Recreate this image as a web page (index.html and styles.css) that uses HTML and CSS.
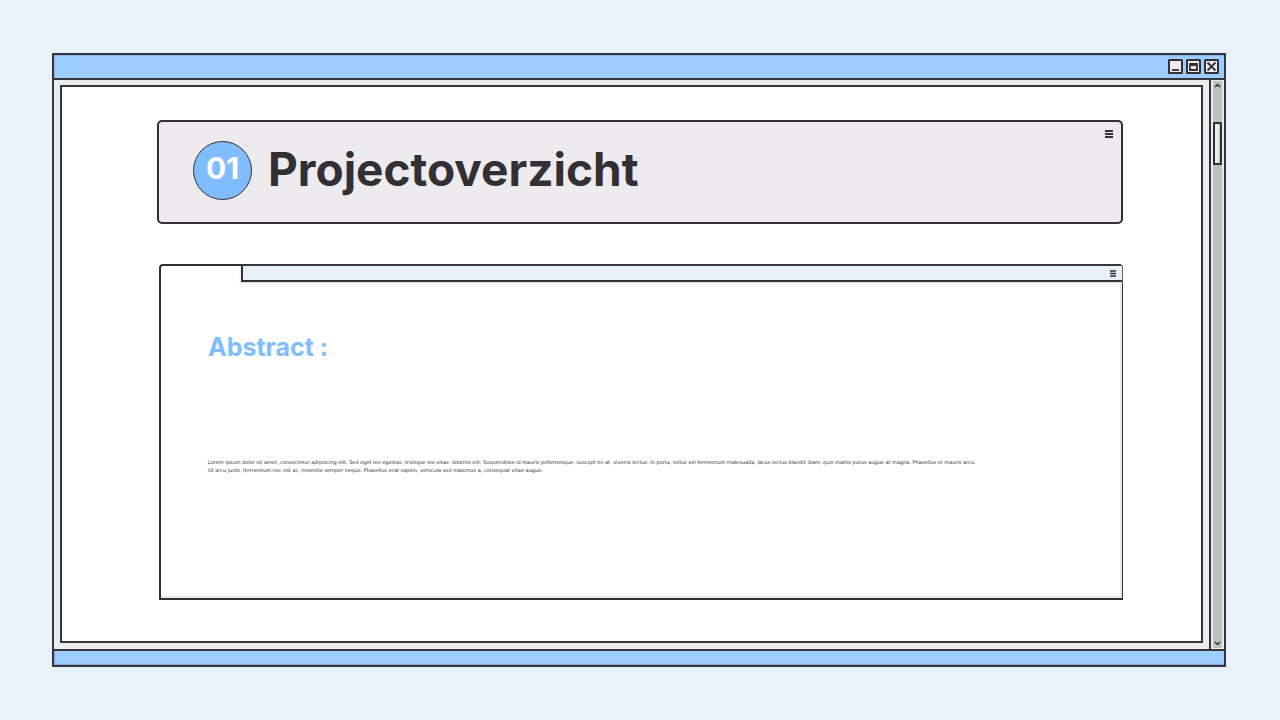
FILE: index.html
```html
<!DOCTYPE html>
<html lang="nl">
<head>
    <meta charset="UTF-8">
    <meta name="viewport" content="width=device-width, initial-scale=1.0">
    <title>Projectoverzicht</title>
    <link rel="stylesheet" href="styles.css">
</head>
<body>
    <div class="window">
        <div class="title-bar">
            <button class="window-button" aria-label="Minimaliseren">
                <svg viewBox="0 0 15 15"><rect x="1" y="1" width="13" height="13" rx="0.5"/><path d="M4 11h7"/></svg>
            </button>
            <button class="window-button" aria-label="Maximaliseren">
                <svg viewBox="0 0 15 15"><rect x="1" y="1" width="13" height="13" rx="0.5"/><path d="M4 5h7v6H4zM4 6h7"/></svg>
            </button>
            <button class="window-button" aria-label="Sluiten">
                <svg viewBox="0 0 15 15"><rect x="1" y="1" width="13" height="13" rx="0.5"/><path d="M3.5 3.5l8 8M11.5 3.5l-8 8"/></svg>
            </button>
        </div>
        <div class="window-body">
            <main class="page">
                <header class="header-box">
                    <span class="number">01</span>
                    <h1>Projectoverzicht</h1>
                    <button class="menu-button" aria-label="Menu">
                        <svg viewBox="0 0 8 8"><path d="M0 1h8M0 4h8M0 7h8"/></svg>
                    </button>
                </header>
                <section class="folder">
                    <div class="folder-top">
                        <div class="folder-tab"></div>
                        <div class="folder-strip">
                            <button class="menu-button small" aria-label="Menu">
                                <svg viewBox="0 0 6 7"><path d="M0 1h6M0 3.5h6M0 6h6"/></svg>
                            </button>
                        </div>
                    </div>
                    <div class="folder-content">
                        <h2>Abstract :</h2>
                        <p>Lorem ipsum dolor sit amet, consectetur adipiscing elit. Sed eget leo egestas, tristique leo vitae, lobortis elit. Suspendisse id mauris pellentesque, suscipit mi at, viverra lectus. In porta, tellus vel fermentum malesuada, lacus lectus blandit diam, quis mattis purus augue at magna. Phasellus et mauris arcu.<br>Ut arcu justo, fermentum nec est ac, molestie semper neque. Phasellus erat sapien, vehicula sed maximus a, consequat vitae augue.</p>
                    </div>
                </section>
            </main>
            <div class="scrollbar">
                <div class="track">
                    <button class="arrow" aria-label="Omhoog">
                        <svg viewBox="0 0 9 9"><path d="M2 6l2.5-2.5L7 6"/></svg>
                    </button>
                    <div class="thumb"></div>
                    <button class="arrow" aria-label="Omlaag">
                        <svg viewBox="0 0 9 9"><path d="M2 3l2.5 2.5L7 3"/></svg>
                    </button>
                </div>
            </div>
        </div>
        <div class="status-bar"></div>
    </div>
</body>
</html>
```
FILE: styles.css
```css
* {
    margin: 0;
    padding: 0;
    box-sizing: border-box;
}

body {
    font-family: Inter, sans-serif;
    color: #322f35;
    display: flex;
    min-height: 100vh;
    padding: 53px 54px 53px 52px;
    background-color: #e9f1f9;
}

button {
    border: none;
    background: none;
    cursor: pointer;
}

svg {
    display: block;
    width: 100%;
    height: 100%;
    fill: none;
    stroke: #322f35;
    stroke-width: 2;
}

.window {
    flex: 1;
    display: flex;
    flex-direction: column;
    border: 2px solid #36353c;
    background-color: #ebebeb;
}

/* Title bar */
.title-bar {
    display: flex;
    justify-content: flex-end;
    align-items: center;
    gap: 3px;
    height: 25px;
    padding-right: 5px;
    background-color: #9dccff;
    border-bottom: 2px solid #36353c;
    box-shadow: inset 1px 1px 1px #86b4e8;
}

.window-button {
    width: 15px;
    height: 15px;
}

.window-button rect {
    fill: #edebee;
}

.window-button path {
    stroke-width: 1.8;
}

.status-bar {
    height: 16px;
    background-color: #9dccff;
    border-top: 2px solid #36353c;
    box-shadow: inset 1px -1px 1px #7da9d6;
}

.window-body {
    flex: 1;
    display: flex;
}

.page {
    flex: 1;
    display: flex;
    flex-direction: column;
    gap: 40px;
    margin: 5px 6px 6px 6px;
    padding: 33px 78px 41px 95px;
    border: 2px solid #36353c;
    background-color: #fefefe;
}

/* Header */
.header-box {
    display: flex;
    align-items: center;
    height: 104px;
    padding: 0 8px 3px 34px;
    border: 2px solid #322f35;
    border-radius: 5px;
    background-color: #edebee;
}

.number {
    width: 59px;
    height: 59px;
    margin-right: 16px;
    padding-bottom: 5px;
    display: flex;
    justify-content: center;
    align-items: center;
    border: 1px solid #322f35;
    border-radius: 50%;
    background-color: #80bdff;
    color: #fff;
    font-size: 30px;
    font-weight: bold;
}

h1 {
    flex: 1;
    font-size: 46px;
    line-height: 56px;
    padding-bottom: 4px;
}

.menu-button {
    align-self: flex-start;
    width: 8px;
    height: 8px;
    margin-top: 8px;
}

.menu-button.small {
    width: 6px;
    height: 7px;
    margin-top: 4px;
}

.small path {
    stroke-width: 1.5;
}

/* Folder */
.folder {
    flex: 1;
    display: flex;
    flex-direction: column;
    margin-left: 2px;
    border: 2px solid #322f35;
    border-right-width: 1px;
    border-radius: 4px 4px 0 0;
    box-shadow: inset -2px -2px 0 #e9e8ec;
}

.folder-top {
    display: flex;
    height: 16px;
}

.folder-tab {
    width: 80px;
}

.folder-strip {
    flex: 1;
    display: flex;
    justify-content: flex-end;
    padding-right: 6px;
    border-left: 2px solid #322f35;
    border-bottom: 2px solid #322f35;
    background-color: #e8f1f7;
    box-shadow: 0 1px 2px #d5d5da;
}

.folder-content {
    padding: 49px 47px;
}

h2 {
    color: #80bdff;
    font-size: 25px;
    line-height: 32px;
}

p {
    margin-top: 95px;
    font-family: "DejaVu Sans", sans-serif;
    font-size: 5px;
    line-height: 8px;
}

/* Scrollbar */
.scrollbar {
    width: 15px;
    padding: 1px 2px 1px 2px;
    border-left: 2px solid #36353c;
}

.track {
    display: flex;
    flex-direction: column;
    height: 100%;
    background-color: #c0c0c2;
}

.arrow {
    width: 9px;
    height: 9px;
}

.arrow path {
    stroke-width: 1.5;
}

.arrow:last-child {
    margin-top: auto;
}

.thumb {
    width: 9px;
    height: 43px;
    margin-top: 32px;
    border: 2px solid #322f35;
    border-radius: 1px;
    background-color: #edebee;
    box-shadow: inset -1px 0 1px #c0c0c2;
}
```
